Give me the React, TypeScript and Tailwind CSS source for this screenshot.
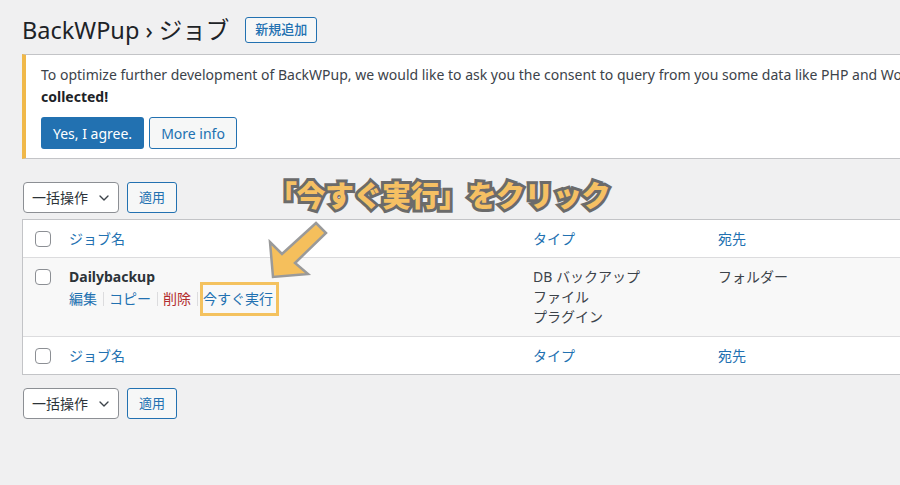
import React from 'react';
import { ChevronDown } from 'lucide-react';

const font = 'font-["Noto_Sans","Noto_Sans_CJK_JP",sans-serif]';

function Checkbox() {
  return <span className="block w-4 h-4 rounded-[4px] border border-[#8c8f94] bg-white" />;
}

function BulkActions() {
  return (
    <div className="flex items-center gap-[8px]">
      <div className="flex items-center justify-between w-[96px] h-[31px] pl-[8px] pr-[6px] bg-white border border-[#8c8f94] rounded-[4px] text-[14px] text-[#2c3338]">
        <span>一括操作</span>
        <ChevronDown className="w-4 h-4 text-[#3c434a]" strokeWidth={2} />
      </div>
      <div className="flex items-center justify-center w-[50px] h-[31px] bg-[#f6f7f7] border border-[#2271b1] rounded-[3px] text-[13px] text-[#2271b1]">
        適用
      </div>
    </div>
  );
}

function HeaderRow({ last }: { last?: boolean }) {
  return (
    <div className={`flex items-center h-[38px] bg-white ${last ? 'border-t border-[#dcdcde]' : 'border-b border-[#dcdcde]'}`}>
      <div className="w-[46px] pl-[12px]"><Checkbox /></div>
      <div className="w-[464px] text-[#2271b1]">ジョブ名</div>
      <div className="w-[185px] text-[#2271b1]">タイプ</div>
      <div className="text-[#2271b1]">宛先</div>
    </div>
  );
}

function Sep() {
  return <span className="self-center w-px h-[14px] ml-[6px] mr-[5px] bg-[#dcdcde]" />;
}

export default function App() {
  return (
    <div className={`relative w-[900px] h-[485px] overflow-hidden bg-[#f0f0f1] ${font} text-[14px] text-[#3c434a]`}>
      <div className="pl-[22px] pt-[16px]">
        <div className="flex items-center gap-[16px] h-[28px]">
          <h1 className="text-[23.5px] leading-[28px] text-[#1d2327]">BackWPup › ジョブ</h1>
          <span className="flex items-center h-[26px] px-[9px] border border-[#2271b1] rounded-[3px] bg-[#f6f7f7] text-[13px] text-[#2271b1] font-medium">
            新規追加
          </span>
        </div>

        <div className="mt-[10px] w-[1000px] h-[105px] bg-white border border-[#c3c4c7] border-l-4 border-l-[#f0b849] pl-[15px] pt-[9px]">
          <p className="leading-[22px] whitespace-nowrap">
            To optimize further development of BackWPup, we would like to ask you the consent to query from you some data like PHP and Wo
          </p>
          <p className="leading-[22px] font-bold text-[#1d2327]">collected!</p>
          <div className="flex gap-[5px] mt-[9px]">
            <span className="flex items-center h-[32px] px-[12px] rounded-[3px] bg-[#2271b1] text-white">Yes, I agree.</span>
            <span className="flex items-center h-[32px] px-[11px] rounded-[3px] border border-[#2271b1] bg-[#f6f7f7] text-[#2271b1]">More info</span>
          </div>
        </div>

        <div className="mt-[23px] pl-[1px]"><BulkActions /></div>

        <div className="mt-[6px] w-[1000px] border border-[#c3c4c7] bg-white">
          <HeaderRow />
          <div className="flex h-[78px] bg-[#f8f8f8] pt-[9px]">
            <div className="w-[46px] pl-[12px] pt-[2px]"><Checkbox /></div>
            <div className="w-[464px]">
              <div className="leading-[20px] font-bold text-[#2c3338]">Dailybackup</div>
              <div className="mt-[2px] leading-[20px] flex">
                <span className="text-[#2271b1]">編集</span>
                <Sep />
                <span className="text-[#2271b1]">コピー</span>
                <Sep />
                <span className="text-[#b32d2e]">削除</span>
                <Sep />
                <span className="text-[#2271b1]">今すぐ実行</span>
              </div>
            </div>
            <div className="w-[185px] leading-[20px] flex flex-col">
              <span>DB バックアップ</span>
              <span>ファイル</span>
              <span>プラグイン</span>
            </div>
            <div className="leading-[20px]">フォルダー</div>
          </div>
          <HeaderRow last />
        </div>

        <div className="mt-[13px] pl-[1px]"><BulkActions /></div>
      </div>

      {/* annotation overlay */}
      <div className="absolute left-[200px] top-[282px] w-[79px] h-[34px] border-[3px] border-[#f4c25f]" />
      <svg className="absolute left-[260px] top-[215px]" width="70" height="70" viewBox="0 0 70 70">
        <path
          d="M56 8 L66 18 L35 48 L48 59 L13 62 L10 27 L22 39 Z"
          fill="#f5bf5c"
          stroke="#9a9a9a"
          strokeWidth="2.5"
          strokeLinejoin="miter"
        />
      </svg>
      <div className="absolute left-[268px] top-[172px] text-[29px] leading-[44px] font-black text-[#f5c063] tracking-[-0.5px] [-webkit-text-stroke:6px_#6b6b6b] [paint-order:stroke_fill] font-['Noto_Sans_CJK_JP',sans-serif]">
        「今すぐ実行」をクリック
      </div>
    </div>
  );
}
